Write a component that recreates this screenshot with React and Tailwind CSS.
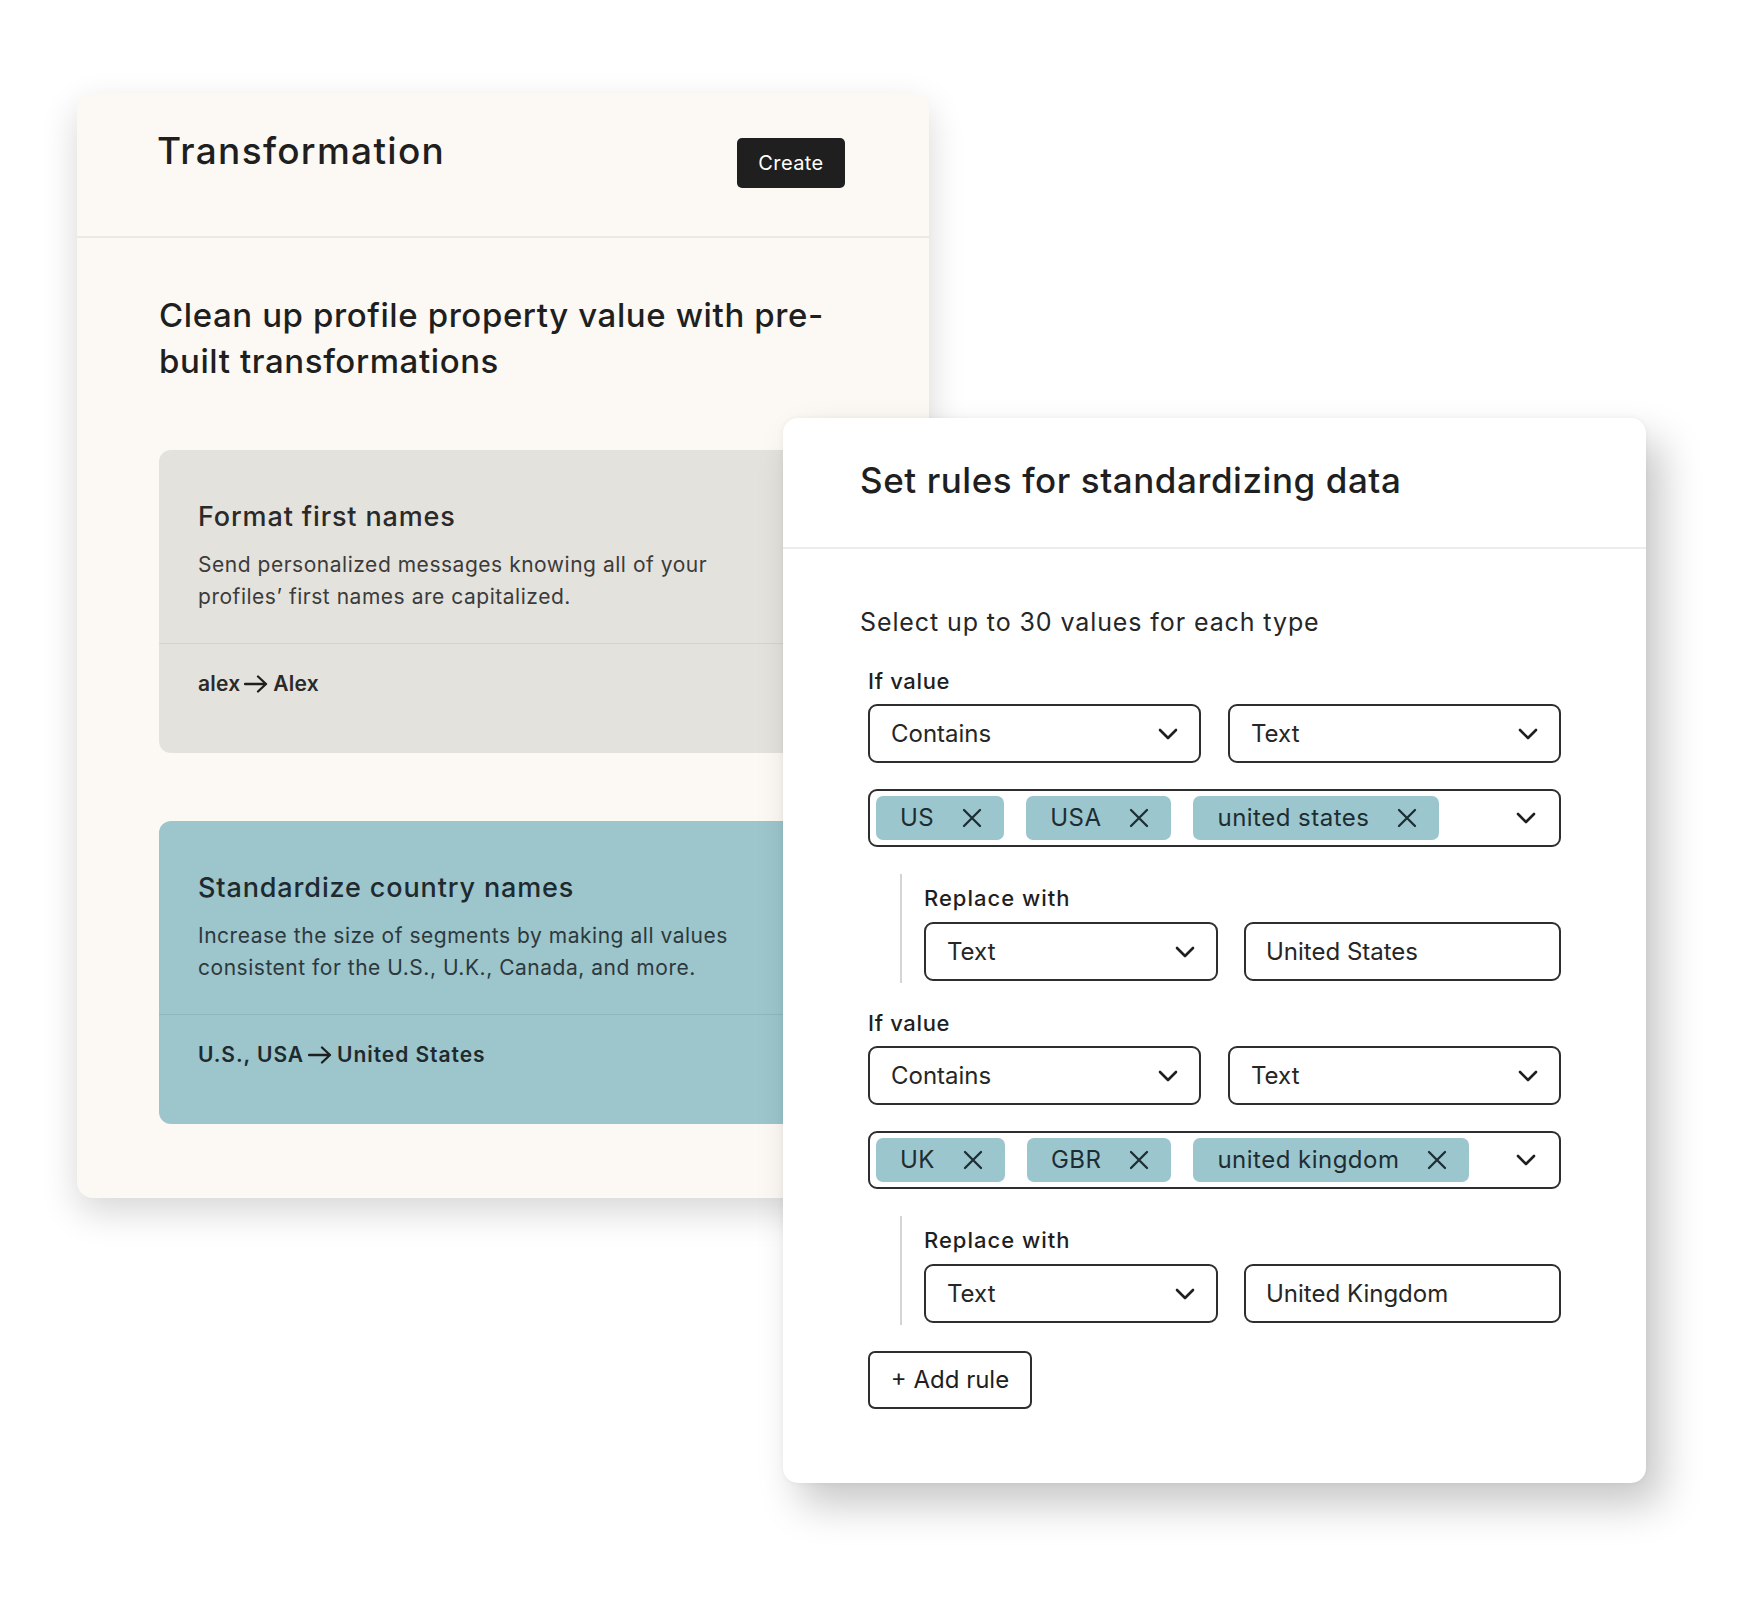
import React from "react";

function Chevron() {
  return (
    <svg width="20" height="12" viewBox="0 0 20 12" fill="none" className="flex-none">
      <path d="M2 2 L10 10 L18 2" stroke="#1f1f1f" strokeWidth="2.6" strokeLinecap="round" strokeLinejoin="round" />
    </svg>
  );
}

function XIcon() {
  return (
    <svg width="20" height="20" viewBox="0 0 20 20" fill="none" className="flex-none">
      <path d="M2 2 L18 18 M18 2 L2 18" stroke="#1d2d33" strokeWidth="2.3" strokeLinecap="round" />
    </svg>
  );
}

function Arrow() {
  return (
    <svg width="25" height="18" viewBox="0 0 25 18" fill="none" className="flex-none mx-[4px]">
      <path d="M1 9 H22 M14 1.5 L22 9 L14 16.5" stroke="#1f1f1f" strokeWidth="2.3" strokeLinecap="round" strokeLinejoin="round" />
    </svg>
  );
}

function Select({ label, className = "" }) {
  return (
    <div className={`h-[59px] border-2 border-[#2e2e2e] rounded-[9px] flex items-center justify-between pl-[21px] pr-[21px] bg-white ${className}`}>
      <span className="text-[24px] text-[#262626]">{label}</span>
      <Chevron />
    </div>
  );
}

function Tag({ text }) {
  return (
    <div className="h-[44px] rounded-[7px] bg-[#9cc6cd] flex items-center pl-[24px] pr-[22px] gap-[28px]">
      <span className="text-[24px] tracking-[0.02em] text-[#1d2d33]">{text}</span>
      <XIcon />
    </div>
  );
}

function TagBox({ tags }) {
  return (
    <div className="mt-[26px] h-[58px] border-2 border-[#2e2e2e] rounded-[9px] flex items-center pl-[6px] pr-[23px]">
      <div className="flex items-center gap-[22px] flex-1">
        {tags.map((t) => (
          <Tag key={t} text={t} />
        ))}
      </div>
      <Chevron />
    </div>
  );
}

function Rule({ tags, replace }) {
  return (
    <div>
      <div className="text-[22px] leading-[28px] font-medium tracking-[0.03em] text-[#1f1f1f]">If value</div>
      <div className="mt-[9px] grid grid-cols-2 gap-[27px]">
        <Select label="Contains" />
        <Select label="Text" />
      </div>
      <TagBox tags={tags} />
      <div className="mt-[27px] ml-[32px] border-l-2 border-[#d4d4d4] pl-[22px] pt-[10px] pb-[2px]">
        <div className="text-[22px] leading-[28px] font-medium tracking-[0.045em] text-[#1f1f1f]">Replace with</div>
        <div className="mt-[10px] flex gap-[26px]">
          <Select label="Text" className="w-[294px] flex-none" />
          <div className="flex-1 h-[59px] border-2 border-[#2e2e2e] rounded-[9px] flex items-center pl-[20px] bg-white">
            <span className="text-[24px] text-[#262626]">{replace}</span>
          </div>
        </div>
      </div>
    </div>
  );
}

function Feature({ bg, divider, title, desc, from, to, textColor, footTrack }) {
  return (
    <div className={`rounded-[12px] ${bg} w-[690px]`}>
      <div className={`px-[39px] pt-[50px] pb-[30px] border-b ${divider}`}>
        <div className={`text-[27px] leading-[34px] font-medium tracking-[0.032em] ${textColor}`}>{title}</div>
        <div className={`mt-[15px] text-[21px] leading-[32px] tracking-[0.025em] ${textColor} opacity-90`}>{desc}</div>
      </div>
      <div className={`px-[39px] pt-[24px] pb-[53px] flex items-center text-[21px] leading-[32px] font-semibold ${footTrack} ${textColor}`}>
        <span>{from}</span>
        <Arrow />
        <span>{to}</span>
      </div>
    </div>
  );
}

export default function App() {
  return (
    <div className="relative w-[1751px] h-[1600px] bg-white overflow-hidden font-[Inter,sans-serif]">
      <div className="absolute left-[77px] top-[93px] w-[852px] h-[1105px] rounded-[16px] bg-[#fcf9f4] shadow-[0_14px_36px_rgba(0,0,0,0.16)] overflow-hidden">
        <div className="flex justify-between items-start pl-[80px] pr-[84px] pt-[36px] h-[145px] border-b-2 border-[#ece9e3]">
          <div className="text-[37px] leading-[44px] font-medium tracking-[0.035em] text-[#1f1f1f]">Transformation</div>
          <div className="mt-[9px] w-[108px] h-[50px] rounded-[5px] bg-[#1f1f1f] text-white text-[20px] tracking-[0.02em] flex items-center justify-center">
            Create
          </div>
        </div>
        <div className="pl-[82px] pt-[54px]">
          <div className="text-[33px] leading-[46px] font-medium tracking-[0.018em] text-[#1f1f1f] w-[720px]">
            Clean up profile property value with pre-built transformations
          </div>
          <div className="mt-[66px]">
            <Feature
              bg="bg-[#e4e2dd]"
              divider="border-[#d5d3ce]"
              textColor="text-[#2a2a2a]"
              footTrack="tracking-[0.01em]"
              title="Format first names"
              desc={<>Send personalized messages knowing all of your<br />profiles’ first names are capitalized.</>}
              from="alex"
              to="Alex"
            />
          </div>
          <div className="mt-[68px]">
            <Feature
              bg="bg-[#9cc5cc]"
              divider="border-[#8db7be]"
              textColor="text-[#1f2a2e]"
              footTrack="tracking-[0.045em]"
              title="Standardize country names"
              desc={<>Increase the size of segments by making all values<br />consistent for the U.S., U.K., Canada, and more.</>}
              from="U.S., USA"
              to="United States"
            />
          </div>
        </div>
      </div>

      <div className="absolute left-[783px] top-[418px] w-[863px] h-[1065px] rounded-[15px] bg-white shadow-[16px_22px_40px_rgba(0,0,0,0.22),0_0_6px_rgba(0,0,0,0.05)]">
        <div className="pl-[77px] pt-[40px] pb-[45px] border-b-2 border-[#ececec]">
          <div className="text-[35px] leading-[44px] font-medium tracking-[0.016em] text-[#1f1f1f]">Set rules for standardizing data</div>
        </div>
        <div className="pl-[77px] pr-[85px] pt-[57px]">
          <div className="text-[25px] leading-[32px] tracking-[0.036em] text-[#262626]">Select up to 30 values for each type</div>
          <div className="pl-[8px] mt-[29px] flex flex-col gap-[26px]">
            <Rule tags={["US", "USA", "united states"]} replace="United States" />
            <Rule tags={["UK", "GBR", "united kingdom"]} replace="United Kingdom" />
          </div>
          <div className="pl-[8px] mt-[26px]">
            <div className="w-[164px] h-[58px] border-2 border-[#2e2e2e] rounded-[7px] flex items-center justify-center text-[24px] text-[#1f1f1f]">
              + Add rule
            </div>
          </div>
        </div>
      </div>
    </div>
  );
}
